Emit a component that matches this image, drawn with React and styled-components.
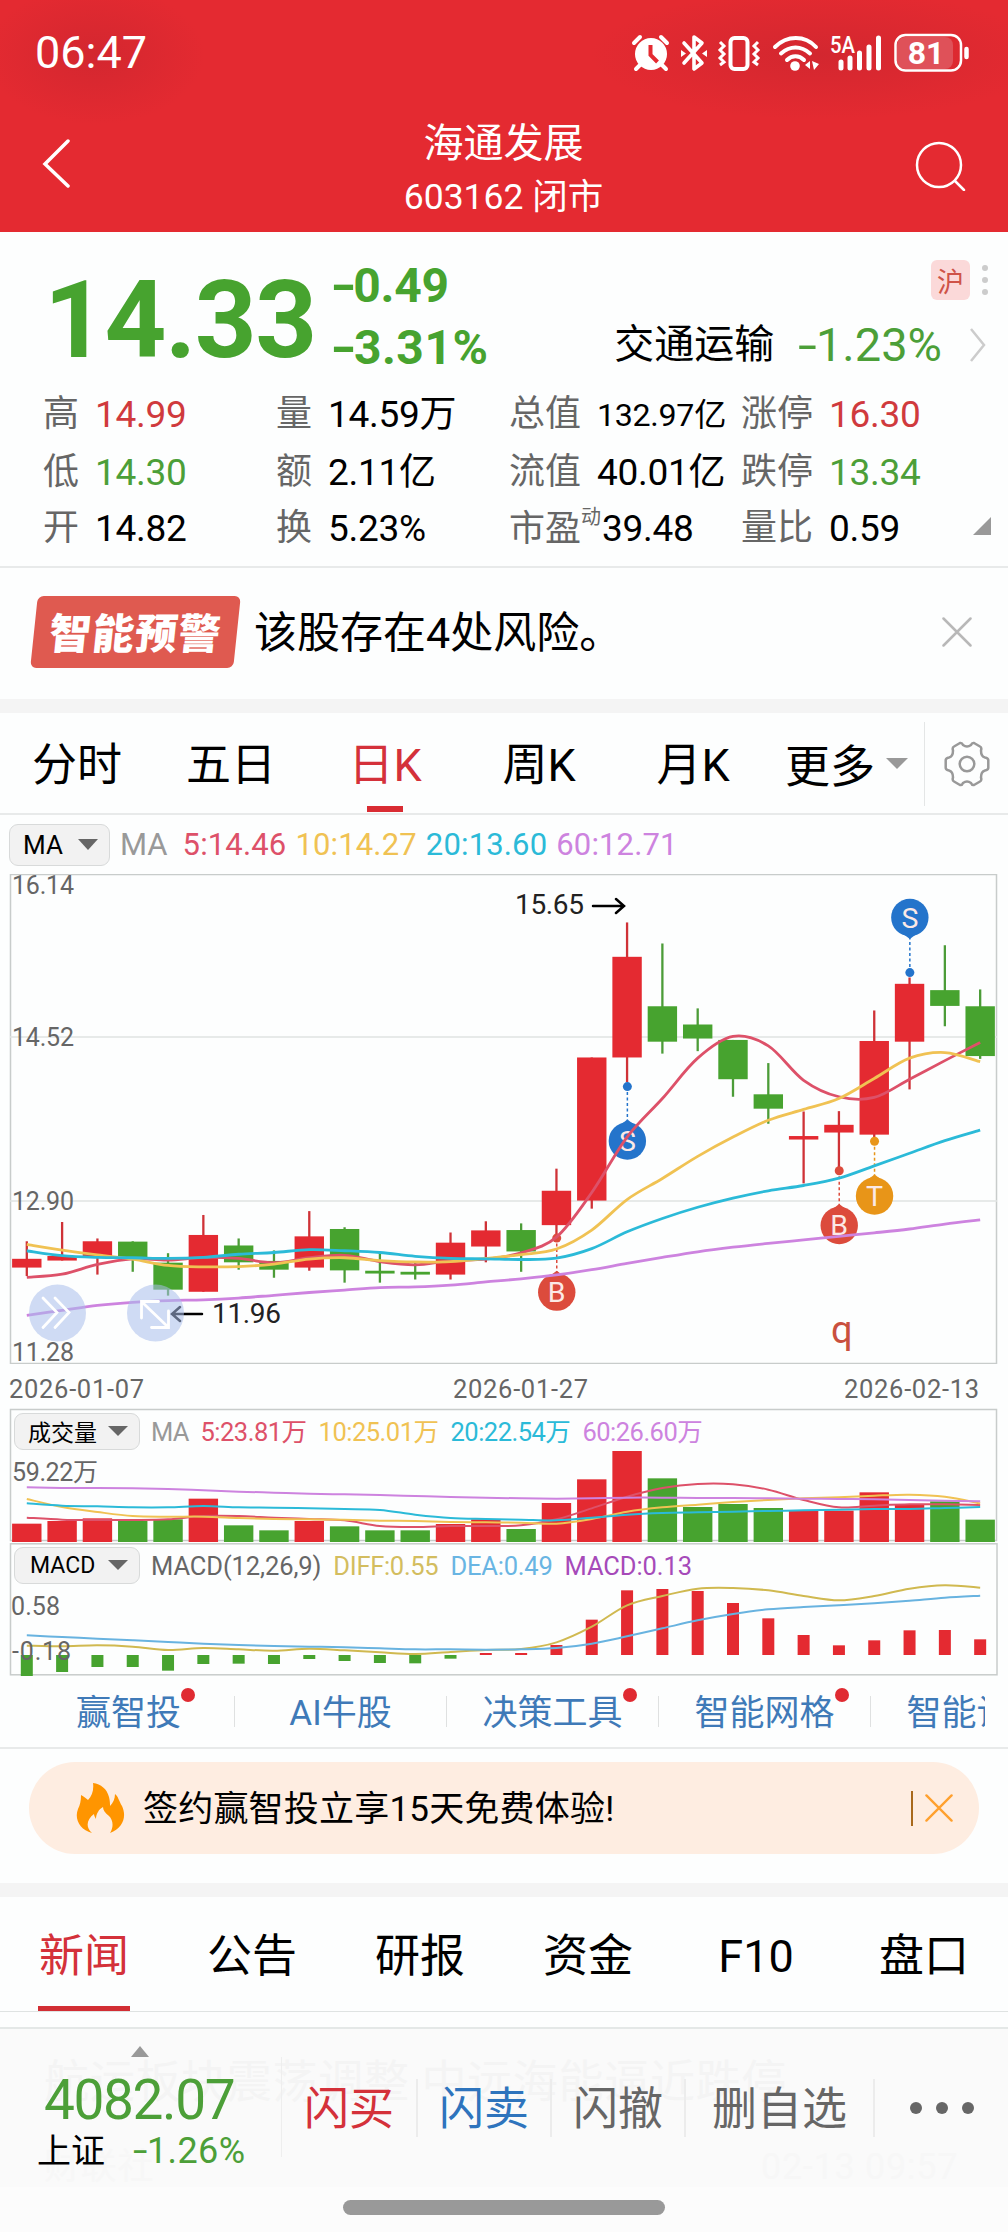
import React from "react";
import styled, { createGlobalStyle } from "styled-components";

const RED = "#e42a31";
const GREEN = "#47a32f";
const MA_COLORS = ["#dd5169", "#f0c253", "#2bbad8", "#cd83df"];

const GlobalStyle = createGlobalStyle`
  * {
    box-sizing: border-box;
  }

  body {
    margin: 0;
    background: #fdfefe;
    color: #000;
    font-family: Roboto, "Noto Sans CJK SC", sans-serif;
    -webkit-font-smoothing: antialiased;
  }

  svg {
    display: block;
    flex: none;
  }
`;

const Page = styled.div`
  display: flex;
  flex-direction: column;
  width: 1008px;
  height: 2232px;
  overflow: hidden;
`;

const Text = styled.span`
  font-size: ${props => props.$size}px;
  font-weight: ${props => props.$weight || 400};
  letter-spacing: ${props => props.$track || 0}px;
  color: ${props => props.$color || "inherit"};
  line-height: 1.2;
  white-space: nowrap;
`;

const Minus = styled.span`
  display: inline-block;
  margin-right: 0.1em;
  transform: scaleX(1.45);
  transform-origin: left;
`;

/* header */

const Header = styled.header`
  height: 232px;
  background:
    radial-gradient(ellipse 110px 70px at 95px 55px, rgba(190, 35, 45, 0.45), transparent),
    radial-gradient(ellipse 230px 65px at 820px 55px, rgba(190, 35, 45, 0.45), transparent),
    ${RED};
  color: #fff;
`;

const StatusBar = styled.div`
  display: flex;
  align-items: center;
  justify-content: space-between;
  height: 105px;
  padding: 0 37px 0 35px;
`;

const NavBar = styled.div`
  display: grid;
  grid-template-columns: 54px 1fr 54px;
  align-items: center;
  height: 127px;
  padding: 0 39px 10px 40px;
`;

const Title = styled.div`
  display: flex;
  flex-direction: column;
  align-items: center;
  padding-top: 12px;
  padding-right: 2px;
  gap: 8px;
`;

/* quote */

const Quote = styled.section`
  height: 336px;
  border-bottom: 2px solid #e8eaea;
`;

const PriceRow = styled.div`
  display: flex;
  height: 148px;
  padding: 0 20px 0 44px;
`;

const Change = styled.div`
  display: flex;
  flex-direction: column;
  gap: 4px;
  padding: 25px 0 0 14px;
  color: ${GREEN};
`;

const Price = styled.div`
  padding-top: 24px;
  color: ${GREEN};
`;

const Sector = styled.div`
  display: flex;
  flex-direction: column;
  align-items: flex-end;
  margin-left: auto;
  padding-top: 28px;
`;

const Market = styled.div`
  display: flex;
  align-items: center;
  gap: 12px;
  height: 40px;
`;

const MarketTag = styled.div`
  display: flex;
  align-items: center;
  justify-content: center;
  width: 39px;
  height: 40px;
  border-radius: 6px;
  background: #fbd9d9;
  color: #cf5348;
  font-size: 27px;
`;

const SectorRow = styled.div`
  display: flex;
  align-items: center;
  height: 52px;
  margin-top: 19px;
  padding-right: 2px;
`;

const Stats = styled.div`
  display: grid;
  grid-template-columns: 233px 233px 232px 1fr;
  grid-template-rows: 58px 58px 54px;
  padding: 6px 0 0 43px;
  position: relative;
`;

const Stat = styled.div`
  display: flex;
  align-items: center;
  color: ${props => props.$color || "#000"};
`;

const StatLabel = styled.span`
  width: ${props => (props.$wide ? 88 : 52)}px;
  font-size: 36px;
  line-height: 1.2;
  color: #666;
  white-space: nowrap;

  sup {
    display: inline-block;
    height: 20px;
    font-size: 20px;
    line-height: 20px;
    vertical-align: 17px;
  }
`;

const StatCorner = styled.div`
  position: absolute;
  right: 17px;
  bottom: 21px;
  border-left: 18px solid transparent;
  border-bottom: 18px solid #999;
`;

/* alert */

const Alert = styled.section`
  display: flex;
  align-items: center;
  height: 131px;
  padding: 0 36px 3px 34px;
`;

const AlertTag = styled.div`
  display: flex;
  align-items: center;
  justify-content: center;
  width: 203px;
  height: 72px;
  margin-right: 17px;
  padding-bottom: 3px;
  border-radius: 6px;
  background: #df5a50;
  color: #fff;
  font-size: 42px;
  font-weight: 900;
  letter-spacing: 1px;
  transform: skewX(-6deg);
`;

const AlertText = styled(Text)`
  padding-top: 4px;
`;

const Push = styled.div`
  margin-left: auto;
`;

const Band = styled.div`
  height: 14px;
  background: #f4f4f4;
`;

/* period tabs */

const Periods = styled.nav`
  display: flex;
  height: 102px;
  border-bottom: 2px solid #e8eaea;
`;

const Period = styled.div`
  display: flex;
  flex-direction: column;
  align-items: center;
  justify-content: flex-end;
  width: 154px;
  font-size: 45px;
  line-height: 54px;
  color: ${props => (props.$active ? "#d4313a" : "#000")};

  &::after {
    content: "";
    width: 36px;
    height: 6px;
    margin: 13px 0 1px;
    background: ${props => (props.$active ? "#d92c33" : "transparent")};
  }
`;

const MorePeriods = styled.div`
  display: flex;
  align-items: center;
  gap: 11px;
  flex: 1;
  padding-left: 15px;
  font-size: 45px;
`;

const Settings = styled.div`
  display: flex;
  align-items: center;
  justify-content: center;
  width: 84px;
  height: 84px;
  margin-top: 9px;
  border-left: 1px solid #e4e6e6;
`;

const Caret = styled.i`
  border: ${props => props.$w}px solid transparent;
  border-bottom: 0;
  border-top: ${props => props.$h}px solid ${props => props.$color};
`;

/* charts */

const Legend = styled.div`
  display: flex;
  align-items: center;
  gap: ${props => props.$gap}px;
  height: ${props => props.$height}px;
  padding-left: ${props => props.$left}px;
`;

const Picker = styled.div`
  display: flex;
  align-items: center;
  justify-content: space-between;
  width: ${props => props.$width}px;
  height: ${props => props.$height}px;
  padding: 0 11px 0 ${props => props.$left || 13}px;
  margin-right: ${props => props.$after}px;
  border: 1px solid #d8dada;
  border-radius: 9px;
  background: #f2f2f2;
  font-size: ${props => props.$size}px;
`;

const Dates = styled.div`
  display: grid;
  grid-template-columns: 444px 391px auto;
  height: 45px;
  padding: 9px 0 0 9px;
  font-size: 25.5px;
  letter-spacing: 0.7px;
  line-height: 32px;
  color: #666;
`;

const Pane = styled.div`
  position: relative;
  height: ${props => props.$height}px;
  margin-bottom: ${props => props.$after || 0}px;
`;

const PaneChart = styled.svg`
  position: absolute;
  inset: 0;
  overflow: visible;
`;

const PaneLegend = styled(Legend)`
  position: relative;

  ${Text} {
    padding-top: 3px;
  }
`;

/* links */

const Links = styled.div`
  height: 74px;
  padding: 0 23px;
  border-bottom: 2px solid #e8eaea;
`;

const LinkTrack = styled.div`
  display: flex;
  align-items: center;
  height: 72px;
  overflow: hidden;
`;

const LinkItem = styled.div`
  display: flex;
  flex: none;
  align-items: center;
  justify-content: center;
  width: 212px;
  height: 31px;
  padding-bottom: 4px;
  border-right: 1px solid #dfe1e1;
  font-size: 35px;
  color: #3f7ab8;
`;

const LinkLabel = styled.span`
  position: relative;
  white-space: nowrap;

  &::after {
    content: "";
    display: ${props => (props.$dot ? "block" : "none")};
    position: absolute;
    top: 4px;
    right: -14px;
    width: 14px;
    height: 14px;
    border-radius: 50%;
    background: #e02b32;
  }
`;

/* promo */

const PromoWrap = styled.div`
  height: 134px;
  padding: 13px 29px 0;
`;

const Promo = styled.div`
  display: flex;
  align-items: center;
  height: 92px;
  padding: 0 26px 0 46px;
  border-radius: 46px;
  background: #feede1;
`;

const PromoText = styled(Text)`
  padding-top: 3px;
  margin-left: 18px;
`;

const PromoRule = styled.div`
  width: 2px;
  height: 35px;
  margin: 0 12px 0 auto;
  background: #a8691c;
`;

/* info tabs */

const InfoTabs = styled.nav`
  display: flex;
  height: 115px;
  border-bottom: 1px solid #dfe3e2;
`;

const InfoTab = styled.div`
  display: flex;
  flex-direction: column;
  align-items: center;
  justify-content: flex-end;
  width: 168px;
  font-size: 45px;
  line-height: 54px;
  color: ${props => (props.$active ? "#d4313a" : "#000")};

  &::after {
    content: "";
    width: 92px;
    height: 5px;
    margin-top: 22px;
    background: ${props => (props.$active ? "#d22e34" : "transparent")};
  }
`;

/* bottom bar */

const BottomBar = styled.footer`
  display: flex;
  position: relative;
  height: 160px;
  margin-top: 15px;
  border-top: 2px solid #e4e8e7;
  background: #fafafa;
`;

const Ghost = styled.div`
  position: absolute;
  top: ${props => props.$top}px;
  left: ${props => props.$left}px;
  font-size: ${props => props.$size}px;
  letter-spacing: 0.7px;
  line-height: 1.2;
  color: ${props => props.$color};
  white-space: nowrap;
`;

const IndexBox = styled.div`
  display: flex;
  flex-direction: column;
  position: relative;
  width: 282px;
  height: 100px;
  margin-top: 28px;
  border-right: 1px solid #eee;
`;

const IndexCaret = styled.i`
  position: absolute;
  top: -11px;
  left: 131px;
  border: 9px solid transparent;
  border-top: 0;
  border-bottom: 11px solid #999;
`;

const IndexValue = styled.div`
  height: 71px;
  padding: 10px 0 0 44px;
  color: #4c9f38;
`;

const IndexName = styled.div`
  display: flex;
  align-items: center;
  gap: 28px;
  padding: 2px 0 0 37px;
`;

const Actions = styled.div`
  display: flex;
  flex: 1;
  height: 58px;
  margin-top: 50px;
  position: relative;
`;

const Action = styled.div`
  display: flex;
  align-items: center;
  justify-content: center;
  width: ${props => props.$width}px;
  padding-bottom: 6px;
  border-right: 2px solid #ececec;
  font-size: 45px;
  color: ${props => props.$color};
`;

const Dots = styled.div`
  display: flex;
  align-items: center;
  gap: ${props => props.$gap}px;
  flex-direction: ${props => (props.$vertical ? "column" : "row")};
  padding-left: ${props => props.$left || 0}px;

  i {
    width: ${props => props.$size}px;
    height: ${props => props.$size}px;
    border-radius: 50%;
    background: ${props => props.$color};
  }
`;

const HomeArea = styled.div`
  display: flex;
  justify-content: center;
  flex: 1;
  padding-top: 13px;
  background: #fcfcfc;
`;

const HomeIndicator = styled.div`
  width: 322px;
  height: 15px;
  border-radius: 8px;
  background: #999;
`;

/* data */

const stats = [
  { label: "高", value: "14.99", color: "#d03a3d" },
  { label: "量", value: "14.59万" },
  { label: "总值", value: "132.97亿", size: 32.2 },
  { label: "涨停", value: "16.30", color: "#d03a3d" },
  { label: "低", value: "14.30", color: "#4c9f38" },
  { label: "额", value: "2.11亿" },
  { label: "流值", value: "40.01亿" },
  { label: "跌停", value: "13.34", color: "#4c9f38" },
  { label: "开", value: "14.82" },
  { label: "换", value: "5.23%" },
  { label: "市盈", sup: "动", value: "39.48" },
  { label: "量比", value: "0.59" }
];

// [high, body top, body bottom, low, rising], measured down the pane in steps
const candles = [
  [1087, 1137, 1162, 1186, 1],
  [1032, 1129, 1142, 1142, 1],
  [1079, 1087, 1130, 1182, 1],
  [1087, 1088, 1138, 1174, 0],
  [1121, 1148, 1225, 1242, 0],
  [1012, 1069, 1231, 1231, 1],
  [1079, 1099, 1147, 1168, 0],
  [1113, 1143, 1168, 1191, 0],
  [1001, 1073, 1162, 1171, 1],
  [1047, 1052, 1170, 1205, 0],
  [1120, 1171, 1179, 1205, 0],
  [1145, 1174, 1182, 1196, 0],
  [1062, 1091, 1182, 1196, 1],
  [1030, 1056, 1102, 1147, 1],
  [1036, 1055, 1116, 1174, 0],
  [880, 943, 1041, 1070, 1],
  [563, 563, 971, 994, 1],
  [178, 276, 563, 633, 1],
  [238, 417, 518, 552, 0],
  [423, 469, 509, 545, 0],
  [513, 513, 625, 675, 0],
  [579, 668, 709, 752, 0],
  [717, 787, 797, 922, 1],
  [716, 755, 777, 880, 1],
  [429, 516, 783, 790, 1],
  [335, 353, 518, 654, 1],
  [243, 371, 416, 474, 0],
  [369, 417, 559, 567, 0]
];

const priceMa = [
  [1190, 1181, 1153, 1137, 1141, 1133, 1136, 1148, 1134, 1127, 1145, 1154, 1142, 1138, 1120, 1075, 948, 790, 680, 565, 503, 530, 628, 675, 677, 625, 572, 520],
  [1096, 1112, 1126, 1138, 1156, 1160, 1159, 1152, 1138, 1134, 1142, 1146, 1145, 1136, 1125, 1109, 1055, 968, 908, 845, 790, 742, 711, 680, 623, 565, 549, 575],
  [1114, 1128, 1133, 1134, 1136, 1133, 1124, 1119, 1111, 1114, 1119, 1130, 1136, 1137, 1139, 1135, 1108, 1060, 1022, 990, 964, 943, 928, 907, 872, 836, 800, 770],
  [1298, 1284, 1270, 1261, 1256, 1254, 1249, 1241, 1233, 1226, 1219, 1217, 1212, 1203, 1194, 1183, 1168, 1150, 1133, 1117, 1104, 1093, 1083, 1073, 1063, 1052, 1038, 1026]
];

const volumes = [371, 363, 355, 363, 358, 296, 376, 391, 363, 379, 391, 391, 372, 358, 387, 309, 238, 153, 235, 321, 312, 324, 333, 332, 277, 312, 304, 359];

const volumeMa = [
  [353, 359, 360, 360, 358, 348, 348, 353, 357, 361, 378, 381, 378, 378, 376, 358, 325, 290, 264, 252, 253, 269, 300, 322, 317, 313, 313, 315],
  [297, 321, 336, 348, 350, 350, 354, 357, 358, 359, 362, 363, 366, 367, 368, 371, 357, 335, 322, 314, 306, 300, 295, 292, 287, 284, 290, 310],
  [310, 317, 319, 322, 322, 318, 322, 323, 325, 327, 330, 344, 354, 357, 359, 361, 353, 344, 339, 337, 335, 333, 331, 329, 327, 327, 324, 321],
  [262, 264, 264, 265, 267, 271, 275, 278, 281, 283, 285, 288, 291, 293, 295, 296, 295, 293, 293, 294, 294, 295, 296, 297, 298, 300, 302, 304]
];

const macdBars = [828, 816, 801, 801, 812, 792, 791, 792, 777, 783, 789, 790, 776, 759, 759, 735, 659, 571, 567, 573, 609, 655, 705, 736, 721, 691, 690, 718];
const diff = [737, 739, 736, 740, 750, 744, 748, 752, 746, 751, 757, 762, 756, 750, 747, 727, 680, 616, 588, 566, 564, 571, 588, 601, 588, 566, 556, 563];
const dea = [706, 711, 716, 721, 726, 731, 735, 738, 740, 742, 745, 748, 748, 749, 748, 744, 731, 709, 685, 661, 642, 628, 621, 616, 610, 602, 593, 587];

const trades = [
  { i: 17, dot: 646, pin: 801, letter: "S", color: "#2474cb" },
  { i: 15, dot: 1078, pin: 1232, letter: "B", color: "#dc4b3c" },
  { i: 23, dot: 886, pin: 1042, letter: "B", color: "#dc4b3c" },
  { i: 24, dot: 802, pin: 958, letter: "T", color: "#e89518" },
  { i: 25, dot: 321, pin: 164, letter: "S", color: "#2474cb" }
];

const barX = i => 26.8 + i * 35.31;
const priceY = v => v / 2.851 - 14;
const volumeY = v => v / 3 - 9;
const macdY = v => v / 3 - 143;

// Catmull-Rom through every bar
const curve = (values, toY) => {
  const pts = values.map((v, i) => [barX(i), toY(v)]);
  return pts.reduce((d, p, i) => {
    if (i === 0) return `M${p[0]} ${p[1]}`;
    const a = pts[i - 2] || pts[i - 1];
    const b = pts[i - 1];
    const c = pts[i + 1] || p;
    return `${d}C${b[0] + (p[0] - a[0]) / 6} ${b[1] + (p[1] - a[1]) / 6} ${p[0] - (c[0] - b[0]) / 6} ${p[1] - (c[1] - b[1]) / 6} ${p[0]} ${p[1]}`;
  }, "");
};

const Lines = ({ series, colors, toY, width }) =>
  series.map((values, i) => (
    <path key={i} d={curve(values, toY)} fill="none" stroke={colors[i]} strokeWidth={width} />
  ));

const StatusIcons = () => (
  <svg width="340" height="44" viewBox="632 32 340 44" fill="none" stroke="#fff">
    <circle cx="652" cy="55" r="16" fill="#fff" stroke="none" />
    <path d="M635 44l6-6M662 38l6 6M641 66l-4 4M663 66l4 4" strokeWidth="4" strokeLinecap="round" />
    <path d="M651.5 46v10l7 7" stroke={RED} strokeWidth="4" />
    <path d="M685 44l18 20-8 6V38l8 6-18 20" strokeWidth="3.6" strokeLinejoin="round" strokeLinecap="round" />
    <path d="M682 51l5 3.500-5 3.500zM708 51l-5 3.500 5 3.500z" fill="#fff" stroke="none" />
    <rect x="731.500" y="39" width="17" height="31" rx="4" strokeWidth="4" />
    <path d="M721 43l4 4-4 4 4 4-4 4 4 4-4 3M759 43l-4 4 4 4-4 4 4 4-4 4 4 3" strokeWidth="3" />
    <path d="M776 48c12-12 30-12 41 0M782 54.500c9-8 20-8 29 0M788 61c5-5 12-5 17 0" strokeWidth="4" strokeLinecap="round" />
    <circle cx="796" cy="67" r="4.800" fill="#fff" stroke="none" />
    <path d="M806 66l5-4v8zM813 62l7 3-5 6z" fill="#fff" stroke="none" />
    <text x="831" y="53.500" fontSize="23" fontWeight="500" fill="#fff" stroke="none" textLength="25" lengthAdjust="spacingAndGlyphs">5A</text>
    <path d="M842 63v6M851 59v10M860.500 54v15M870 48v21M879.500 39v30" strokeWidth="5" strokeLinecap="round" />
    <rect x="898" y="38" width="56" height="32" rx="8" fill="#df5159" stroke="none" />
    <rect x="896.500" y="36" width="65.500" height="35.500" rx="10" strokeWidth="2.500" />
    <path d="M967.500 50v8" strokeWidth="4.500" strokeLinecap="round" />
    <text x="927" y="65" fontSize="32" fontWeight="700" textAnchor="middle" fill="#fff" stroke="none">81</text>
  </svg>
);

const Cross = ({ size, color }) => (
  <svg width={size} height={size} viewBox="0 0 30 30">
    <path d="M1.500 1.500l27 27M28.500 1.500l-27 27" stroke={color} strokeWidth="2.500" strokeLinecap="round" />
  </svg>
);

const Gear = () => (
  <svg width="46" height="46" viewBox="-23 -23 46 46" fill="none" stroke="#999" strokeWidth="2.500" strokeLinejoin="round">
    <path d="M-7 -21Q-5 -21.500 -4 -19Q0 -16 4 -19Q5 -21.500 7 -21L13 -17.500Q15 -16.500 14 -13.500Q14 -7.500 18 -6.500Q21 -6 21.300 -4V4Q21 6 18 6.500Q14 7.500 14 13.500Q15 16.500 13 17.500L7 21Q5 21.500 4 19Q0 16 -4 19Q-5 21.500 -7 21L-13 17.500Q-15 16.500 -14 13.500Q-14 7.500 -18 6.500Q-21 6 -21.300 4V-4Q-21 -6 -18 -6.500Q-14 -7.500 -14 -13.500Q-15 -16.500 -13 -17.500Z" />
    <circle r="7.300" />
  </svg>
);

const Flame = () => (
  <svg width="50" height="52" viewBox="0 0 50 52">
    <path
      d="M18 1c8 1 14 6 16 14 1 4 1 7 1 9 3-3 5-7 5-12 3 2 4 7 7 12 5 11 1 22-12 27 4-6 3-13-1-17-4-3-6-6-6-9-4 2-7 7-7 12-1-2-2-3-2-5-7 5-9 13-2 19C5 48-1 37 3 27c2-4 3-8 3-14 3 2 5 3 7 5 4-4 6-10 5-17z"
      fill="#ff9500"
    />
  </svg>
);

const PriceChart = () => (
  <svg width="1008" height="490">
    <rect x="10.500" y="0.500" width="986" height="489" fill="none" stroke="#c8cccb" strokeWidth="1.500" />
    <path d="M10 163h987M10 327h987" stroke="#dfe3e2" strokeWidth="1.500" />
    {candles.map(([high, top, bottom, low, up], i) => (
      <g key={i}>
        <path d={`M${barX(i)} ${priceY(high)}V${priceY(low)}`} stroke={up ? "#cf3237" : "#4c9c38"} strokeWidth="2.300" />
        <rect x={barX(i) - 14.7} y={priceY(top)} width="29.400" height={priceY(bottom) - priceY(top)} fill={up ? RED : GREEN} />
      </g>
    ))}
    {trades.map(t => {
      const x = barX(t.i) + 0.3;
      const dir = t.pin > t.dot ? -1 : 1;
      const pin = priceY(t.pin);
      return (
        <g key={t.i} fill={t.color}>
          <path d={`M${x} ${priceY(t.dot)}V${pin}`} stroke={t.color} strokeWidth="1.500" strokeDasharray="3 2.500" />
          <circle cx={x} cy={priceY(t.dot)} r="4.500" />
          <circle cx={x} cy={pin} r="18.700" />
          <path d={`M${x - 6} ${pin + dir * 17}h12l-6 ${dir * 4.5}z`} />
          <text x={x} y={pin + 10} fontSize="28.500" textAnchor="middle" fill="#fbe9e6">{t.letter}</text>
        </g>
      );
    })}
    <Lines series={priceMa} colors={MA_COLORS} toY={priceY} width="2.800" />
    <g fontSize="25" fill="#666">
      <text x="12" y="20" textLength="62">16.14</text>
      <text x="12" y="172" textLength="62">14.52</text>
      <text x="12" y="336" textLength="62">12.90</text>
      <text x="12" y="486.500" textLength="62">11.28</text>
    </g>
    <g fontSize="28" fill="#222">
      <text x="515" y="39.500" textLength="69">15.65</text>
      <text x="212" y="448.500" textLength="69">11.96</text>
    </g>
    <path d="M593 32h29M616 25l8 7-8 7M202 440h-29M180 433l-8 7 8 7" fill="none" stroke="#000" strokeWidth="2.500" strokeLinecap="round" />
    <text x="831" y="469" fontSize="38" fill="#c9503f">q</text>
    <g fill="#aabeeb" fillOpacity="0.55">
      <circle cx="57.500" cy="439" r="28.500" />
      <circle cx="155.500" cy="439" r="28.500" />
    </g>
    <path
      d="M43 424l14 14.500-14 15M55 424l14 14.500-14 15M141.500 444v-16.500h17M143 429l25 24M168.500 437v16.500h-17"
      fill="none"
      stroke="#fff"
      strokeWidth="2.800"
      strokeLinecap="round"
    />
  </svg>
);

const VolumeChart = () => (
  <PaneChart width="1008" height="132">
    <rect x="10.500" y="0.500" width="986" height="131" fill="none" stroke="#c8cccb" strokeWidth="1.500" />
    {volumes.map((v, i) => (
      <rect key={i} x={barX(i) - 14.7} y={volumeY(v)} width="29.400" height={133 - volumeY(v)} fill={candles[i][4] ? RED : GREEN} />
    ))}
    <Lines series={volumeMa} colors={MA_COLORS} toY={volumeY} width="2" />
    <text x="12" y="72" fontSize="25" fill="#666" textLength="86">59.22万</text>
  </PaneChart>
);

const MacdChart = () => (
  <PaneChart width="1008" height="132">
    <rect x="10.500" y="0.800" width="986.500" height="131" fill="none" stroke="#c8cccb" strokeWidth="1.500" />
    {macdBars.map((v, i) => (
      <rect key={i} x={barX(i) - 6} y={macdY(Math.min(v, 765))} width="12" height={Math.abs(v - 765) / 3} fill={v < 765 ? RED : GREEN} />
    ))}
    <Lines series={[diff, dea]} colors={["#d0b950", "#68b3e0"]} toY={macdY} width="2" />
    <text x="11" y="72" fontSize="25" fill="#666" textLength="49">0.58</text>
    <text x="12" y="117" fontSize="25" fill="#666" textLength="59">-0.18</text>
  </PaneChart>
);

const App = () => (
  <Page>
    <GlobalStyle />
    <Header>
      <StatusBar>
        <Text $size={45}>06:47</Text>
        <StatusIcons />
      </StatusBar>
      <NavBar>
        <svg width="32" height="50" viewBox="0 0 32 50" fill="none" stroke="#fff" strokeWidth="3.500">
          <path d="M28 2L5 25l23 22" strokeLinecap="round" />
        </svg>
        <Title>
          <Text $size={40}>海通发展</Text>
          <Text $size={35.5}>603162 闭市</Text>
        </Title>
        <svg width="54" height="54" viewBox="0 0 54 54" fill="none" stroke="#fff" strokeWidth="2.500">
          <circle cx="24" cy="28" r="22" />
          <path d="M40 44l9 9" strokeLinecap="round" />
        </svg>
      </NavBar>
    </Header>

    <Quote>
      <PriceRow>
        <Price>
          <Text $size={108} $weight={700} $track={-1.5}>14.33</Text>
        </Price>
        <Change>
          <Text $size={48} $weight={700} $track={-0.2}><Minus>-</Minus>0.49</Text>
          <Text $size={48} $weight={700} $track={0.5}><Minus>-</Minus>3.31%</Text>
        </Change>
        <Sector>
          <Market>
            <MarketTag>沪</MarketTag>
            <Dots $vertical $gap={6} $size={6} $color="#ccc">
              <i /><i /><i />
            </Dots>
          </Market>
          <SectorRow>
            <Text $size={40}>交通运输</Text>
            <Text $size={47} $color="#4c9f38" style={{ marginLeft: 24 }}><Minus>-</Minus>1.23%</Text>
            <svg width="16" height="34" viewBox="0 0 16 34" fill="none" stroke="#ccc" strokeWidth="2.500" style={{ marginLeft: 28 }}>
              <path d="M1 1l13 16L1 33" />
            </svg>
          </SectorRow>
        </Sector>
      </PriceRow>
      <Stats>
        {stats.map(s => (
          <Stat key={s.label} $color={s.color}>
            <StatLabel $wide={s.label.length > 1}>
              {s.label}
              {s.sup && <sup>{s.sup}</sup>}
            </StatLabel>
            <Text $size={s.size || 37} $track={-0.3} style={s.sup && { marginLeft: 5 }}>{s.value}</Text>
          </Stat>
        ))}
        <StatCorner />
      </Stats>
    </Quote>

    <Alert>
      <AlertTag>智能预警</AlertTag>
      <AlertText $size={43}>该股存在4处风险。</AlertText>
      <Push>
        <Cross size={30} color="#b8b8b8" />
      </Push>
    </Alert>
    <Band />

    <Periods>
      <Period>分时</Period>
      <Period>五日</Period>
      <Period $active>日K</Period>
      <Period>周K</Period>
      <Period>月K</Period>
      <MorePeriods>
        更多
        <Caret $w={11} $h={11} $color="#999" />
      </MorePeriods>
      <Settings>
        <Gear />
      </Settings>
    </Periods>

    <Legend $height={59} $left={9} $gap={9}>
      <Picker $width={101} $height={42} $size={26} $after={1}>
        MA
        <Caret $w={10} $h={11} $color="#666" />
      </Picker>
      <Text $size={31} $color="#999" style={{ marginRight: 6 }}>MA</Text>
      <Text $size={31} $track={0.15} $color={MA_COLORS[0]}>5:14.46</Text>
      <Text $size={31} $track={0.15} $color={MA_COLORS[1]}>10:14.27</Text>
      <Text $size={31} $track={0.15} $color={MA_COLORS[2]}>20:13.60</Text>
      <Text $size={31} $track={0.15} $color={MA_COLORS[3]}>60:12.71</Text>
    </Legend>
    <PriceChart />
    <Dates>
      <span>2026-01-07</span>
      <span>2026-01-27</span>
      <span>2026-02-13</span>
    </Dates>

    <Pane $height={132} $after={2}>
      <VolumeChart />
      <PaneLegend $height={44} $left={14} $gap={12}>
        <Picker $width={126} $height={37} $size={23} $after={-1}>
          成交量
          <Caret $w={10} $h={10} $color="#666" />
        </Picker>
        <Text $size={25.5} $track={-0.8} $color="#999">MA</Text>
        <Text $size={25.5} $track={-0.5} $color={MA_COLORS[0]}>5:23.81万</Text>
        <Text $size={25.5} $track={-0.5} $color={MA_COLORS[1]}>10:25.01万</Text>
        <Text $size={25.5} $track={-0.5} $color={MA_COLORS[2]}>20:22.54万</Text>
        <Text $size={25.5} $track={-0.5} $color={MA_COLORS[3]}>60:26.60万</Text>
      </PaneLegend>
    </Pane>
    <Pane $height={132}>
      <MacdChart />
      <PaneLegend $height={44} $left={14} $gap={12}>
        <Picker $width={126} $height={37} $size={23} $after={-1} $left={15}>
          MACD
          <Caret $w={10} $h={10} $color="#666" />
        </Picker>
        <Text $size={25.5} $track={-0.1} $color="#666">MACD(12,26,9)</Text>
        <Text $size={25.5} $track={-0.3} $color="#d3bd5f">DIFF:0.55</Text>
        <Text $size={25.5} $track={-0.2} $color="#69b5e3">DEA:0.49</Text>
        <Text $size={25.5} $track={-0.1} $color="#a64ab9">MACD:0.13</Text>
      </PaneLegend>
    </Pane>

    <Links>
      <LinkTrack>
        <LinkItem><LinkLabel $dot>赢智投</LinkLabel></LinkItem>
        <LinkItem><LinkLabel>AI牛股</LinkLabel></LinkItem>
        <LinkItem><LinkLabel $dot>决策工具</LinkLabel></LinkItem>
        <LinkItem><LinkLabel $dot>智能网格</LinkLabel></LinkItem>
        <LinkItem><LinkLabel>智能诊股</LinkLabel></LinkItem>
      </LinkTrack>
    </Links>

    <PromoWrap>
      <Promo>
        <Flame />
        <PromoText $size={35} $track={0.2}>签约赢智投立享15天免费体验!</PromoText>
        <PromoRule />
        <Cross size={28} color="#ffa02e" />
      </Promo>
    </PromoWrap>
    <Band />

    <InfoTabs>
      <InfoTab $active>新闻</InfoTab>
      <InfoTab>公告</InfoTab>
      <InfoTab>研报</InfoTab>
      <InfoTab>资金</InfoTab>
      <InfoTab>F10</InfoTab>
      <InfoTab>盘口</InfoTab>
    </InfoTabs>

    <BottomBar>
      <Ghost $top={27} $left={44} $size={45} $color="#f4f4f4">航运板块震荡调整 中远海能逼近跌停</Ghost>
      <Ghost $top={117} $left={44} $size={36} $color="#f7f7f7">财联社</Ghost>
      <Ghost $top={117} $left={761} $size={36} $color="#f7f7f7">02-13 09:57</Ghost>
      <IndexBox>
        <IndexCaret />
        <IndexValue>
          <Text $size={55} $track={-1.4}>4082.07</Text>
        </IndexValue>
        <IndexName>
          <Text $size={34}>上证</Text>
          <Text $size={36} $track={0.4} $color="#4c9f38"><Minus>-</Minus>1.26%</Text>
        </IndexName>
      </IndexBox>
      <Actions>
        <Action $width={136} $color="#d4313a">闪买</Action>
        <Action $width={134} $color="#2e74bd">闪卖</Action>
        <Action $width={134} $color="#666">闪撤</Action>
        <Action $width={189} $color="#666">删自选</Action>
        <Dots $gap={14} $size={12} $left={35} $color="#666">
          <i /><i /><i />
        </Dots>
      </Actions>
    </BottomBar>
    <HomeArea>
      <HomeIndicator />
    </HomeArea>
  </Page>
);

export default App;
